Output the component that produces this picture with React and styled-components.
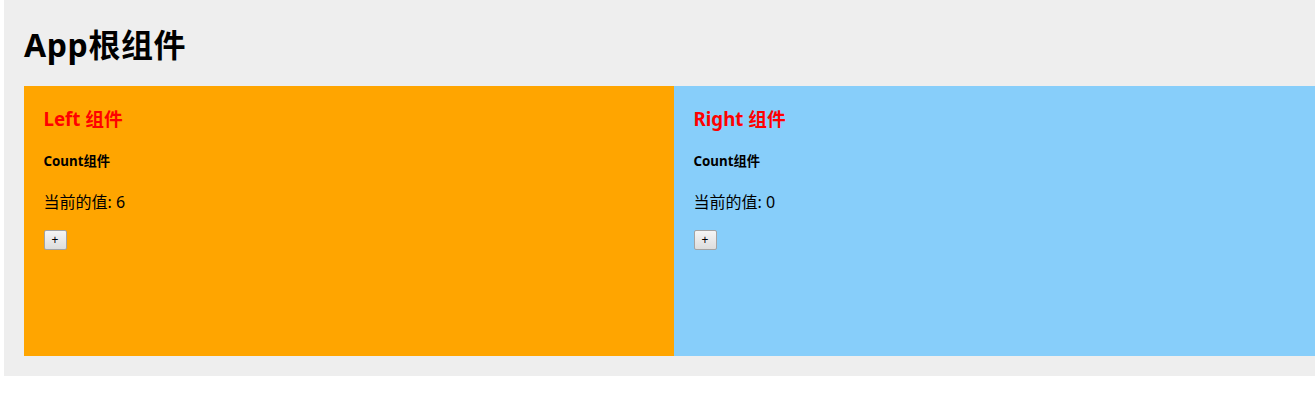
import React, { useState } from 'react'
import styled, { createGlobalStyle } from 'styled-components'

const GlobalStyle = createGlobalStyle`
  html, body {
    margin: 0;
    padding: 0;
    overflow: hidden;
    background: #fff;
  }
  body {
    font-family: 'Noto Sans', 'Noto Sans CJK SC', sans-serif;
    color: #000;
  }
`

export default function App() {
  return (
    <>
      <GlobalStyle />
      <AppContainer>
        <Title>App根组件</Title>
        <Panels>
          <Side title="Left 组件" bg="#ffa500" start={6} />
          <Side title="Right 组件" bg="#87cefa" start={0} />
        </Panels>
      </AppContainer>
    </>
  )
}

function Side({ title, bg, start }) {
  return (
    <Panel $bg={bg}>
      <PanelTitle>{title}</PanelTitle>
      <Count start={start} />
    </Panel>
  )
}

function Count({ start }) {
  const [count, setCount] = useState(start)
  return (
    <div>
      <CountTitle>Count组件</CountTitle>
      <Value>当前的值: {count}</Value>
      <PlusButton onClick={() => setCount(count + 1)}>+</PlusButton>
    </div>
  )
}

const AppContainer = styled.div`
  display: inline-block;
  margin-left: 4px;
  padding: 20px;
  background: #eeeeee;
`

const Title = styled.h1`
  margin: 0 0 16px;
  font-size: 32px;
  line-height: 50px;
  font-weight: 700;
  letter-spacing: 0.6px;
`

const Panels = styled.div`
  display: flex;
`

const Panel = styled.div`
  width: 650px;
  height: 270px;
  box-sizing: border-box;
  padding: 20px 20px 20px 19.5px;
  background: ${p => p.$bg};
`

const PanelTitle = styled.h3`
  margin: 0 0 19px;
  font-size: 18.7px;
  line-height: 25px;
  font-weight: 700;
  color: #ff0000;
`

const CountTitle = styled.h5`
  margin: 21px 0 21px;
  font-size: 13.3px;
  line-height: 18px;
  font-weight: 700;
`

const Value = styled.p`
  margin: 0 0 17px;
  font-size: 16px;
  line-height: 22px;
`

const PlusButton = styled.button`
  display: block;
  width: 23px;
  height: 20px;
  padding: 0;
  font-family: 'Noto Sans', sans-serif;
  font-size: 12px;
  line-height: 16px;
  color: #000;
  border: 1px solid #a3a3a3;
  border-radius: 2px;
  background: linear-gradient(#f5f5f5, #dddddd);
  cursor: pointer;
`
